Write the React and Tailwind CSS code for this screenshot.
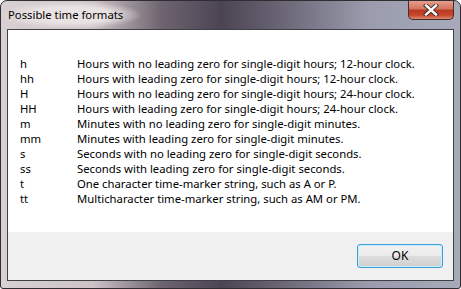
import React from 'react';

const formats = [
  ['h', 'Hours with no leading zero for single-digit hours; 12-hour clock.'],
  ['hh', 'Hours with leading zero for single-digit hours; 12-hour clock.'],
  ['H', 'Hours with no leading zero for single-digit hours; 24-hour clock.'],
  ['HH', 'Hours with leading zero for single-digit hours; 24-hour clock.'],
  ['m', 'Minutes with no leading zero for single-digit minutes.'],
  ['mm', 'Minutes with leading zero for single-digit minutes.'],
  ['s', 'Seconds with no leading zero for single-digit seconds.'],
  ['ss', 'Seconds with leading zero for single-digit seconds.'],
  ['t', 'One character time-marker string, such as A or P.'],
  ['tt', 'Multicharacter time-marker string, such as AM or PM.'],
];

const App = () => {
  return (
    <div className="w-[461px] h-[289px] font-['Noto_Sans',sans-serif] text-[11.3px] text-black">
      <div className="w-full h-full flex flex-col rounded-t-[7px] rounded-b-[3px] border border-[#2e2e33] bg-[linear-gradient(90deg,#d8d0d2_0%,#cdc3c6_20%,#6e6470_35%,#4b4453_48%,#6c6878_62%,#9a9cad_80%,#a6aab9_100%)] relative overflow-hidden">
        {/* Title bar */}
        <div className="h-[28px] flex items-start relative">
          <div className="absolute left-0 top-0 w-[140px] h-[28px] bg-[radial-gradient(ellipse_at_center,rgba(235,228,228,0.95)_40%,rgba(235,228,228,0)_72%)]" />
          <div className="relative pl-[7px] pt-[6px] text-[11.3px] leading-[16px] text-black">Possible time formats</div>
          <div className="ml-auto mr-[6px] w-[46px] h-[20px] mt-[-1px] rounded-b-[5px] border border-[#4a2a2a] border-t-0 bg-[linear-gradient(180deg,#e8a593_0%,#d47560_45%,#b83a22_55%,#c9472c_80%,#d98a70_100%)] flex items-center justify-center relative">
            <svg width="16" height="12" viewBox="0 0 16 12">
              <path d="M3 1.5 L13 10.5 M13 1.5 L3 10.5" stroke="#3a2a2a" strokeWidth="4.2" strokeLinecap="square" />
              <path d="M3 1.5 L13 10.5 M13 1.5 L3 10.5" stroke="#ffffff" strokeWidth="2.4" strokeLinecap="square" />
            </svg>
          </div>
        </div>
        {/* Client area */}
        <div className="flex-1 mx-[6px] mb-[7px] border border-[#3f3f46] flex flex-col relative">
          <div className="h-[202px] bg-white pl-[12px] pt-[26px]">
            {formats.map(([k, d]) => (
              <div key={k} className="flex leading-[15px] h-[15px]">
                <div className="w-[57px]">{k}</div>
                <div>{d}</div>
              </div>
            ))}
          </div>
          <div className="flex-1 bg-[#f0f0f0] flex justify-end items-start pt-[12px] pr-[10px]">
            <button className="w-[86px] h-[24px] rounded-[3px] border border-[#3c9fd8] bg-[linear-gradient(180deg,#f2f2f2_0%,#ebebeb_48%,#dddddd_52%,#cfcfcf_100%)] shadow-[inset_0_0_0_1px_#c4eefc] text-[12px] leading-[16px] text-black">
              OK
            </button>
          </div>
        </div>
      </div>
    </div>
  );
};

export default App;
